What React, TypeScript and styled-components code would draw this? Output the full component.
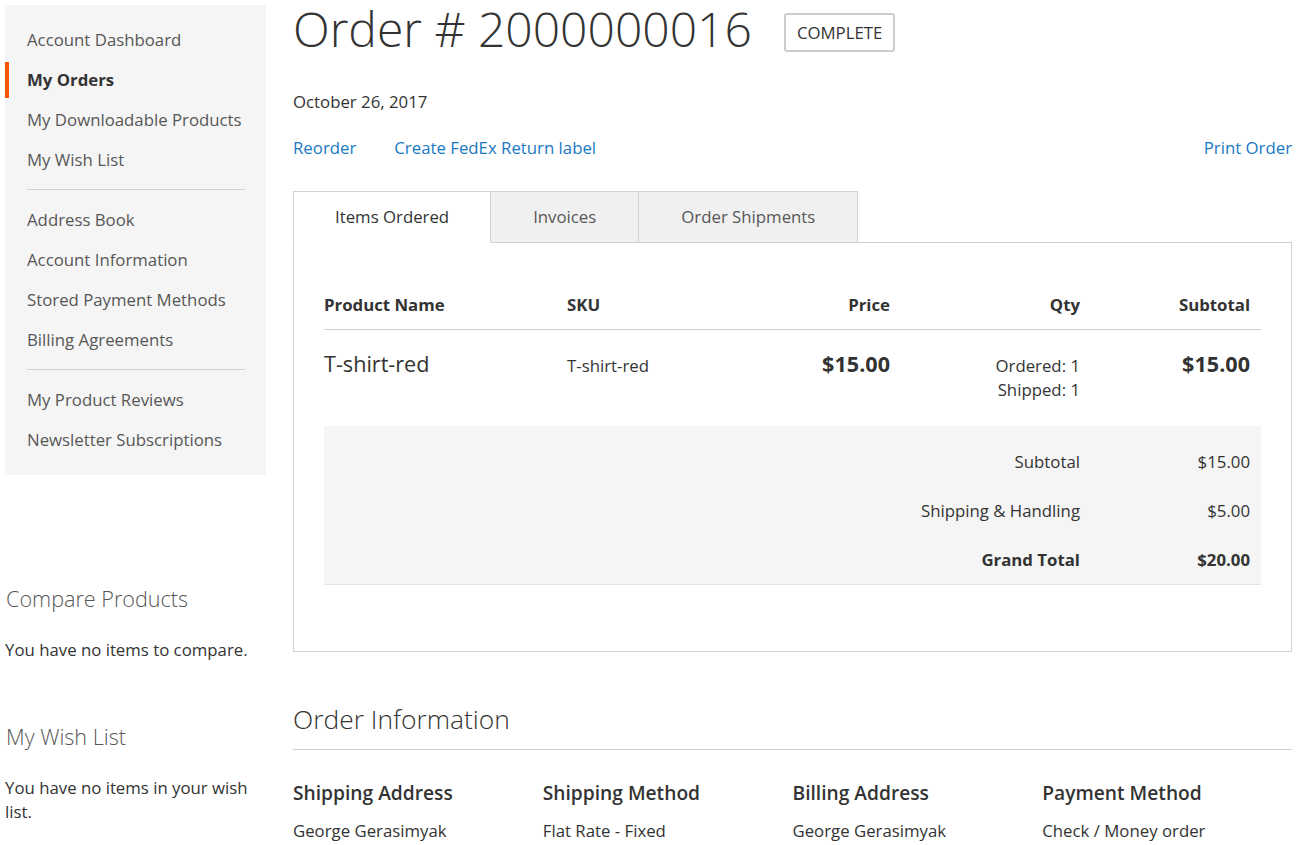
import React from "react";
import styled, { createGlobalStyle } from "styled-components";

const GlobalStyle = createGlobalStyle`
  body {
    margin: 0;
    background: #ffffff;
    color: #333333;
    font-family: "Open Sans", "Liberation Sans", sans-serif;
    font-size: 16.8px;
    line-height: 24px;
  }
`;

const Page = styled.div`
  display: flex;
  align-items: flex-start;
  padding: 0 4px 0 5px;
`;

const Sidebar = styled.aside`
  width: 261px;
  flex-shrink: 0;
  margin-top: 5px;
`;

const NavBox = styled.nav`
  background-color: #f5f5f5;
  padding: 13px 0 17px;
`;

const NavItem = styled.div<{ $active?: boolean }>`
  margin-top: 4px;
  padding: 6px 0 6px 18px;
  border-left: 4px solid ${(p) => (p.$active ? "#ff5501" : "transparent")};
  color: ${(p) => (p.$active ? "#333333" : "#575757")};
  font-weight: ${(p) => (p.$active ? 700 : 400)};
  line-height: 24px;
  white-space: nowrap;
`;

const NavDelimiter = styled.div`
  margin: 11px 21px 12px 22px;
  border-top: 1px solid #d1d1d1;
`;

const SideBlock = styled.div<{ $gap: number }>`
  margin-top: ${(p) => p.$gap}px;
`;

const SideTitle = styled.div`
  font-size: 21.6px;
  font-weight: 300;
  color: #575757;
  line-height: 24px;
  padding-left: 1px;
`;

const SideText = styled.p`
  margin: 27px 0 0;
  line-height: 24px;
`;

const Main = styled.main`
  flex: 1;
  min-width: 0;
  margin-left: 27px;
`;

const TitleRow = styled.div`
  display: flex;
  align-items: flex-start;
  margin-top: 3px;
`;

const PageTitle = styled.h1`
  margin: 0;
  font-size: 48px;
  font-weight: 300;
  line-height: 52.8px;
  color: #333333;
`;

const StatusBadge = styled.span`
  margin: 10px 0 0 32px;
  padding: 6px 11px 5px;
  border: 2px solid #cccccc;
  border-radius: 3px;
  text-transform: uppercase;
  line-height: 24px;
`;

const OrderDate = styled.div`
  margin-top: 34px;
`;

const Actions = styled.div`
  display: flex;
  margin-top: 22px;
`;

const ActionLink = styled.a<{ $right?: boolean }>`
  color: #1979c3;
  text-decoration: none;
  margin-right: 38px;
  ${(p) => p.$right && "margin-left: auto; margin-right: 0;"}
`;

const TabList = styled.div`
  display: flex;
  margin-top: 31px;
`;

const Tab = styled.div<{ $active?: boolean }>`
  position: relative;
  padding: ${(p) => (p.$active ? "13px 41px" : "13px 42px")};
  border: 1px solid #d1d1d1;
  border-bottom: ${(p) => (p.$active ? "1px solid #ffffff" : "none")};
  border-left: ${(p) => (p.$active ? "1px solid #d1d1d1" : "none")};
  margin-bottom: ${(p) => (p.$active ? "-1px" : "0")};
  background-color: ${(p) => (p.$active ? "#ffffff" : "#f0f0f0")};
  color: ${(p) => (p.$active ? "#333333" : "#575757")};
  line-height: 24px;
  z-index: ${(p) => (p.$active ? 1 : 0)};
`;

const TabContent = styled.div`
  border: 1px solid #d1d1d1;
  padding: 38px 30px 66px;
`;

const ItemsTable = styled.table`
  width: 100%;
  table-layout: fixed;
  border-collapse: collapse;
`;

const Th = styled.th<{ $align?: string }>`
  padding: 12px 11px;
  text-align: ${(p) => p.$align || "left"};
  font-weight: 700;
  line-height: 24px;
  border-bottom: 1px solid #d1d1d1;
  &:first-child {
    padding-left: 0;
  }
`;

const Td = styled.td<{ $align?: string; $top?: number }>`
  padding: ${(p) => p.$top ?? 19}px 11px 24px;
  vertical-align: top;
  text-align: ${(p) => p.$align || "left"};
  line-height: 24px;
  &:first-child {
    padding-left: 0;
  }
`;

const ProductName = styled.strong`
  display: block;
  font-size: 21.6px;
  font-weight: 400;
  line-height: 30.86px;
`;

const Price = styled.span`
  display: block;
  font-size: 21.6px;
  font-weight: 700;
  line-height: 30.86px;
`;

const QtyLine = styled.div`
  line-height: 24px;
`;

const Totals = styled.tfoot`
  background-color: #f5f5f5;
  tr:first-child > * {
    padding-top: 24px;
  }
  tr:last-child > * {
    border-bottom: 1px solid #e3e3e3;
  }
`;

const TotalCell = styled.td<{ $strong?: boolean }>`
  padding: 12.5px 11px;
  text-align: right;
  line-height: 24px;
  font-weight: ${(p) => (p.$strong ? 700 : 400)};
`;

const SectionTitle = styled.h2`
  margin: 53px 0 0;
  padding-bottom: 15px;
  border-bottom: 1px solid #d1d1d1;
  font-size: 26.4px;
  font-weight: 300;
  line-height: 29px;
`;

const InfoGrid = styled.div`
  display: grid;
  grid-template-columns: repeat(4, 1fr);
  margin-top: 31px;
`;

const InfoTitle = styled.div`
  font-size: 19.2px;
  font-weight: 600;
  line-height: 24px;
`;

const InfoValue = styled.div`
  margin-top: 14px;
  line-height: 24px;
`;

const navGroups = [
  ["Account Dashboard", "My Orders", "My Downloadable Products", "My Wish List"],
  ["Address Book", "Account Information", "Stored Payment Methods", "Billing Agreements"],
  ["My Product Reviews", "Newsletter Subscriptions"],
];

const totals = [
  { label: "Subtotal", value: "$15.00" },
  { label: "Shipping & Handling", value: "$5.00" },
  { label: "Grand Total", value: "$20.00", strong: true },
];

const infoBoxes = [
  { title: "Shipping Address", value: "George Gerasimyak" },
  { title: "Shipping Method", value: "Flat Rate - Fixed" },
  { title: "Billing Address", value: "George Gerasimyak" },
  { title: "Payment Method", value: "Check / Money order" },
];

const App: React.FC = () => {
  return (
    <>
      <GlobalStyle />
      <Page>
        <Sidebar>
          <NavBox>
            {navGroups.map((group, i) => (
              <React.Fragment key={i}>
                {i > 0 && <NavDelimiter />}
                {group.map((label) => (
                  <NavItem key={label} $active={label === "My Orders"}>
                    {label}
                  </NavItem>
                ))}
              </React.Fragment>
            ))}
          </NavBox>

          <SideBlock $gap={112}>
            <SideTitle>Compare Products</SideTitle>
            <SideText>You have no items to compare.</SideText>
          </SideBlock>

          <SideBlock $gap={63}>
            <SideTitle>My Wish List</SideTitle>
            <SideText>You have no items in your wish list.</SideText>
          </SideBlock>
        </Sidebar>

        <Main>
          <TitleRow>
            <PageTitle>Order # 2000000016</PageTitle>
            <StatusBadge>Complete</StatusBadge>
          </TitleRow>
          <OrderDate>October 26, 2017</OrderDate>

          <Actions>
            <ActionLink href="#">Reorder</ActionLink>
            <ActionLink href="#">Create FedEx Return label</ActionLink>
            <ActionLink href="#" $right>
              Print Order
            </ActionLink>
          </Actions>

          <TabList>
            <Tab $active>Items Ordered</Tab>
            <Tab>Invoices</Tab>
            <Tab>Order Shipments</Tab>
          </TabList>

          <TabContent>
            <ItemsTable>
              <colgroup>
                <col style={{ width: 232 }} />
                <col style={{ width: 210 }} />
                <col style={{ width: 135 }} />
                <col style={{ width: 190 }} />
                <col style={{ width: 170 }} />
              </colgroup>
              <thead>
                <tr>
                  <Th>Product Name</Th>
                  <Th>SKU</Th>
                  <Th $align="right">Price</Th>
                  <Th $align="right">Qty</Th>
                  <Th $align="right">Subtotal</Th>
                </tr>
              </thead>
              <tbody>
                <tr>
                  <Td>
                    <ProductName>T-shirt-red</ProductName>
                  </Td>
                  <Td $top={24}>T-shirt-red</Td>
                  <Td $align="right">
                    <Price>$15.00</Price>
                  </Td>
                  <Td $align="right" $top={24}>
                    <QtyLine>Ordered: 1</QtyLine>
                    <QtyLine>Shipped: 1</QtyLine>
                  </Td>
                  <Td $align="right">
                    <Price>$15.00</Price>
                  </Td>
                </tr>
              </tbody>
              <Totals>
                {totals.map((t) => (
                  <tr key={t.label}>
                    <TotalCell colSpan={4} $strong={t.strong}>
                      {t.label}
                    </TotalCell>
                    <TotalCell $strong={t.strong}>{t.value}</TotalCell>
                  </tr>
                ))}
              </Totals>
            </ItemsTable>
          </TabContent>

          <SectionTitle>Order Information</SectionTitle>
          <InfoGrid>
            {infoBoxes.map((box) => (
              <div key={box.title}>
                <InfoTitle>{box.title}</InfoTitle>
                <InfoValue>{box.value}</InfoValue>
              </div>
            ))}
          </InfoGrid>
        </Main>
      </Page>
    </>
  );
};

export default App;
